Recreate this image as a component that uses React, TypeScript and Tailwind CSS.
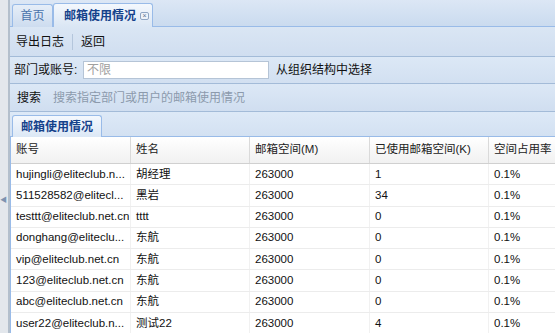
import React from 'react';

const rows = [
  { account: 'hujingli@eliteclub.n...', name: '胡经理', space: '263000', used: '1', rate: '0.1%' },
  { account: '511528582@elitecl...', name: '黑岩', space: '263000', used: '34', rate: '0.1%' },
  { account: 'testtt@eliteclub.net.cn', name: 'tttt', space: '263000', used: '0', rate: '0.1%' },
  { account: 'donghang@eliteclu...', name: '东航', space: '263000', used: '0', rate: '0.1%' },
  { account: 'vip@eliteclub.net.cn', name: '东航', space: '263000', used: '0', rate: '0.1%' },
  { account: '123@eliteclub.net.cn', name: '东航', space: '263000', used: '0', rate: '0.1%' },
  { account: 'abc@eliteclub.net.cn', name: '东航', space: '263000', used: '0', rate: '0.1%' },
  { account: 'user22@eliteclub.n...', name: '测试22', space: '263000', used: '4', rate: '0.1%' },
];

const cols = ['账号', '姓名', '邮箱空间(M)', '已使用邮箱空间(K)', '空间占用率'];
const widths = ['w-[120px]', 'w-[119px]', 'w-[120px]', 'w-[119px]', 'flex-1'];

const font = { fontFamily: '"Liberation Sans", "Noto Sans CJK SC", sans-serif' };

export default function App() {
  return (
    <div className="w-[555px] h-[333px] overflow-hidden flex bg-white text-[11.5px] text-[#111]" style={font}>
      {/* collapsed west panel */}
      <div className="w-[10px] shrink-0 bg-[#e3e7ec] border-r-2 border-[#b3bfcc] flex flex-col items-start pt-[196px]">
        <span className="text-[7px] leading-none text-[#7d93b0]">◀</span>
      </div>

      <div className="flex-1 flex flex-col min-w-0">
        {/* top tabs */}
        <div className="h-[27px] shrink-0 flex items-end pl-[2px] bg-gradient-to-b from-[#dce7f5] to-[#cadbef] border-b border-[#99bbe8]">
          <div className="h-[23px] w-[41px] mb-[-1px] flex items-center justify-center rounded-t-[3px] border border-b-0 border-[#99bbe8] bg-gradient-to-b from-[#e6eef8] to-[#cddcef] text-[#4a72ab] text-[12px]">
            首页
          </div>
          <div className="h-[24px] w-[100px] mb-[-1px] flex items-center pl-[10px] rounded-t-[3px] border border-b-0 border-[#99bbe8] bg-gradient-to-b from-[#f4f8fd] to-[#dae6f4] text-[#15428b] text-[12px] font-bold">
            邮箱使用情况
            <span className="ml-[4px] w-[9px] h-[8px] rounded-[2px] border border-[#8fa6c4] bg-[#eef3f9] text-[7px] leading-[6px] text-center text-[#5a7190] font-normal">×</span>
          </div>
        </div>

        {/* toolbar */}
        <div className="h-[30px] shrink-0 flex items-center pl-[6px] bg-gradient-to-b from-[#dae6f4] to-[#d0def0] border-b border-[#a3bbd8] text-[12px]">
          <span>导出日志</span>
          <span className="mx-[8px] h-[16px] w-px bg-[#b4c6dc]" />
          <span>返回</span>
        </div>

        {/* filter row */}
        <div className="h-[27px] shrink-0 flex items-center pl-[4px] bg-gradient-to-b from-[#dce8f6] to-[#d2e0f1] border-b border-[#a3bbd8] text-[12px]">
          <span className="w-[69px]">部门或账号:</span>
          <div className="w-[186px] h-[18px] bg-white border border-[#b5c4d6] flex items-center pl-[3px] text-[#a0a0a0]">不限</div>
          <span className="ml-[7px]">从组织结构中选择</span>
        </div>

        {/* search row */}
        <div className="h-[28px] shrink-0 flex items-center pl-[7px] bg-gradient-to-b from-[#dce8f6] to-[#d0def0] border-b border-[#a3bbd8] text-[12px]">
          <span>搜索</span>
          <span className="ml-[12px] text-[#8c9aac]">搜索指定部门或用户的邮箱使用情况</span>
        </div>

        {/* grid tab */}
        <div className="h-[25px] shrink-0 flex items-end pl-[2px] bg-gradient-to-b from-[#dde9f7] to-[#d3e1f2] border-b border-[#99bbe8]">
          <div className="h-[22px] w-[90px] mb-[-1px] flex items-center justify-center rounded-t-[3px] border border-b-0 border-[#99bbe8] bg-gradient-to-b from-[#f4f8fd] to-[#dce8f6] text-[#15428b] text-[12px] font-bold">
            邮箱使用情况
          </div>
        </div>

        {/* grid */}
        <div className="flex-1 border-l border-[#99bbe8] bg-white">
          <div className="h-[27px] flex bg-gradient-to-b from-[#ffffff] to-[#f1f1f1] border-b border-[#d0d0d0] text-[#222]">
            {cols.map((c, i) => (
              <div key={c} className={`${widths[i]} shrink-0 flex items-center pl-[5px] ${i < 4 ? 'border-r border-[#dadada]' : ''}`}>
                {c}
              </div>
            ))}
          </div>
          {rows.map((r) => (
            <div key={r.account} className="h-[21.3px] flex border-b border-[#ececec]">
              {[r.account, r.name, r.space, r.used, r.rate].map((v, i) => (
                <div key={i} className={`${widths[i]} shrink-0 flex items-center pl-[5px] whitespace-nowrap overflow-hidden ${i < 4 ? 'border-r border-[#f1f1f1]' : ''}`}>
                  {v}
                </div>
              ))}
            </div>
          ))}
        </div>
      </div>
    </div>
  );
}
